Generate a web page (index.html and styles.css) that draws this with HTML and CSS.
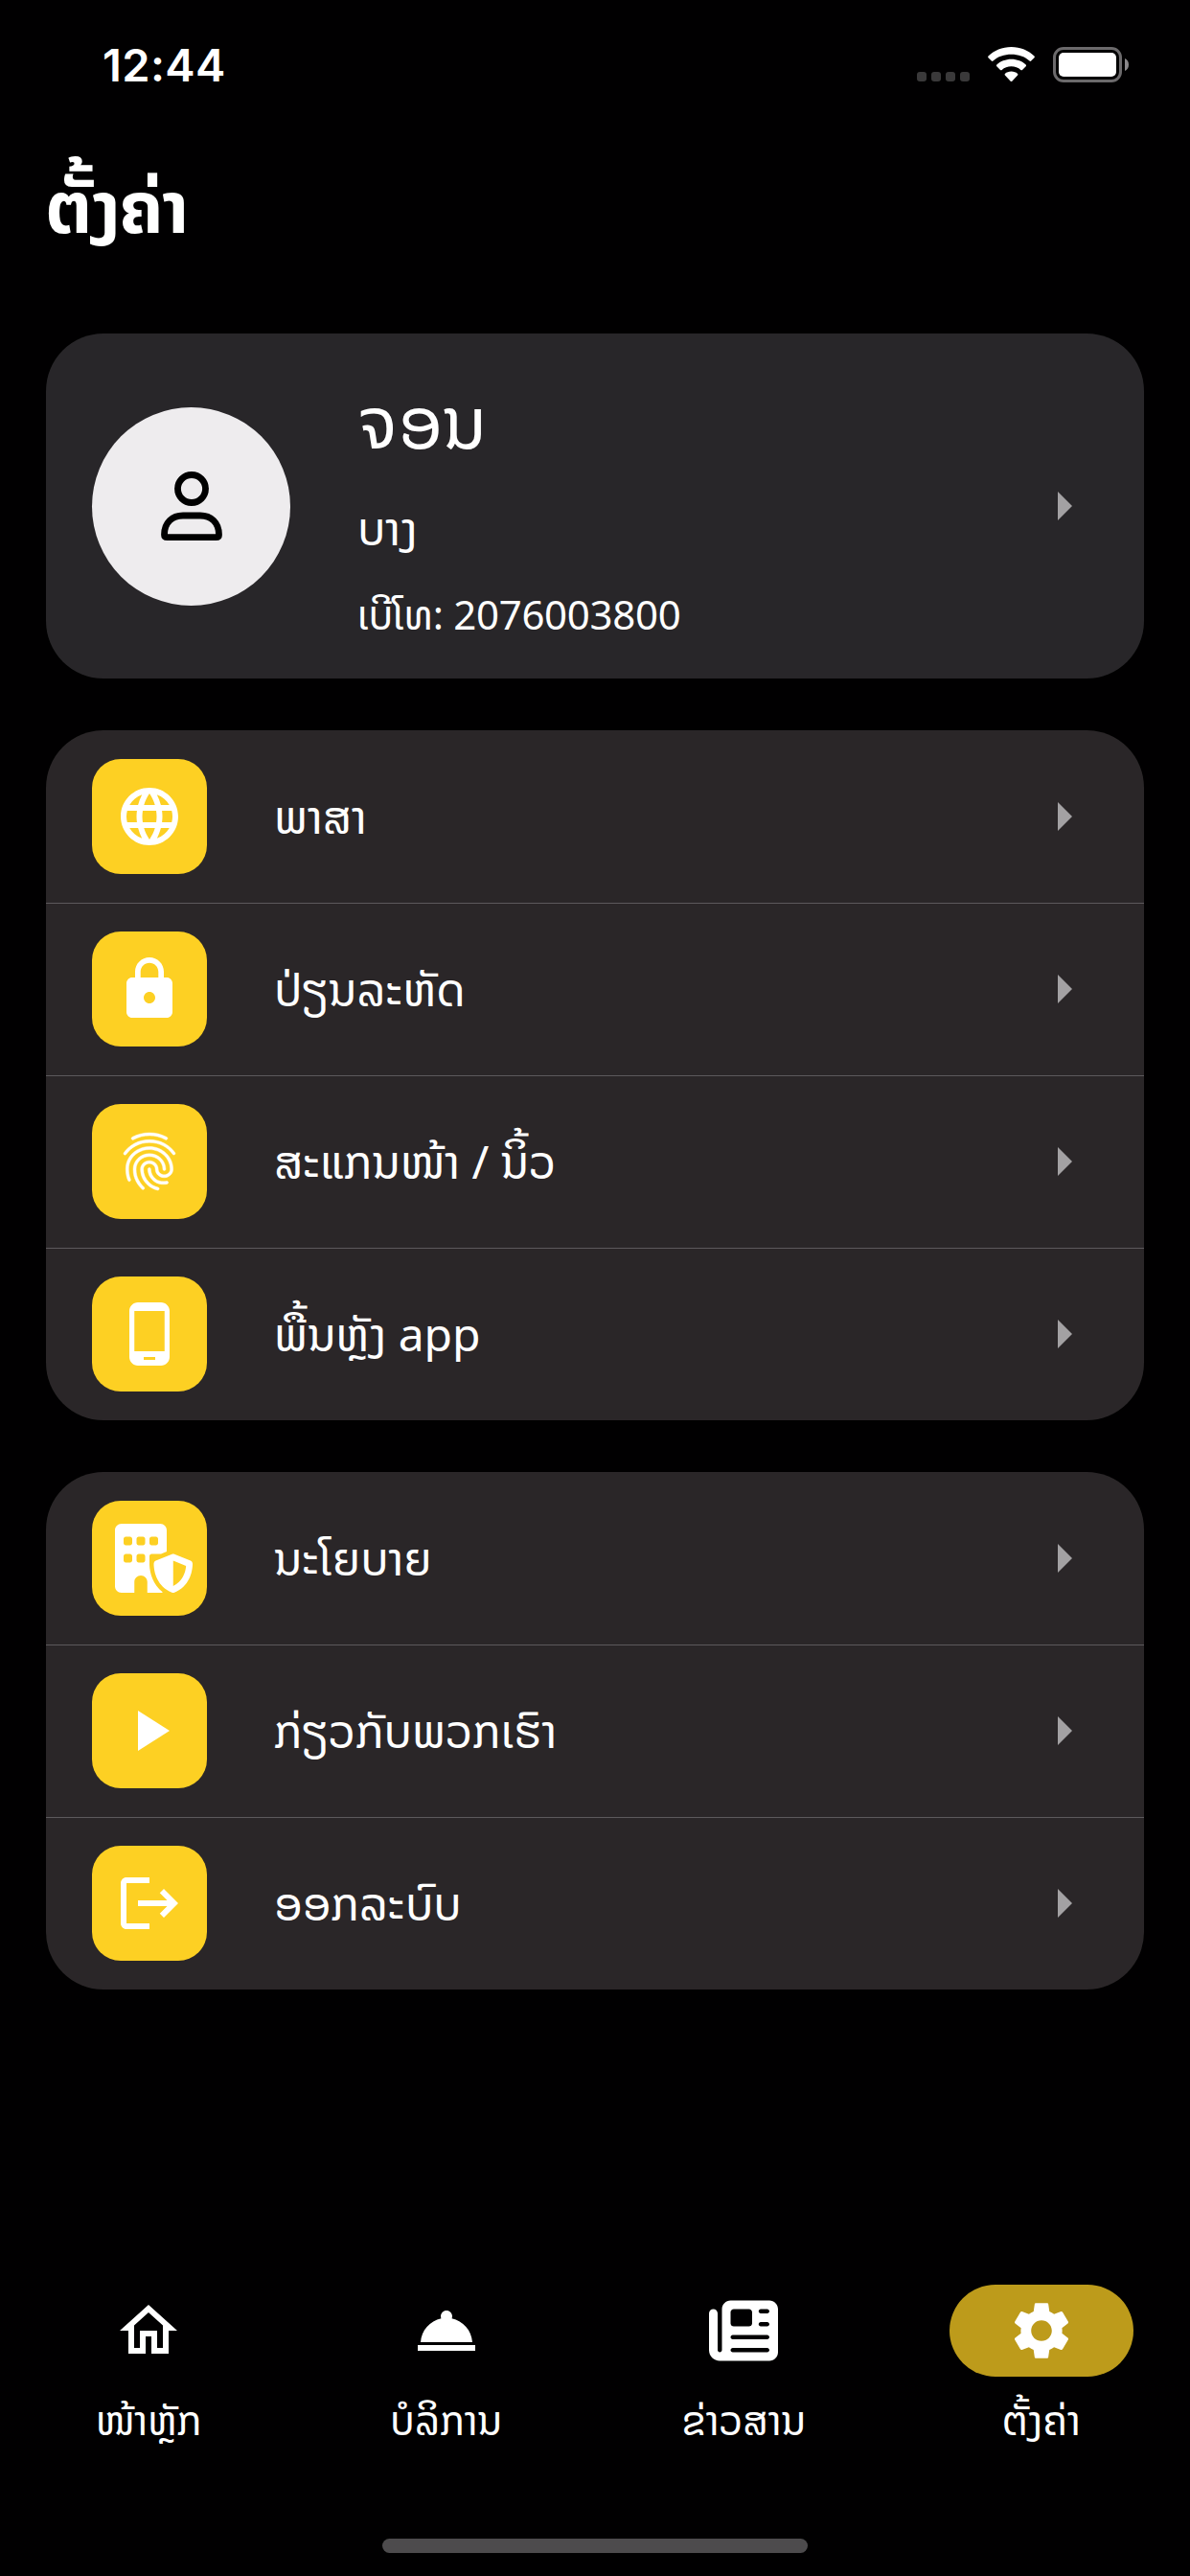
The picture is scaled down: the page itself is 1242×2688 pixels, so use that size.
FILE: index.html
```html
<!DOCTYPE html>
<html lang="lo">
<head>
	<title>ຕັ້ງຄ່າ</title>
	<meta charset="utf-8">
	<link rel="stylesheet" href="styles.css">
</head>
<body>
	<div id="wrapper">
		<div class="status">
			<span class="time">12:44</span>
			<div class="dots"><i></i><i></i><i></i><i></i></div>
			<svg class="wifi" viewBox="0 0 49 37">
				<path d="M24.5 0C34 0 42.5 3.7 48.5 9.6c.5.5.5 1.2 0 1.7l-3.3 3.3c-.5.5-1.2.5-1.7 0C38.5 9.9 31.8 7.8 24.5 7.8S10.5 9.9 5.5 14.6c-.5.5-1.2.5-1.7 0L.5 11.3c-.5-.5-.5-1.2 0-1.7C6.5 3.7 15 0 24.5 0z"/>
				<path d="M24.5 12.8c6 0 11.4 2.2 15.2 5.7.5.5.5 1.2 0 1.7l-3.7 3.7c-.5.5-1.2.5-1.7 0-2.6-2.3-6-3.6-9.8-3.6s-7.2 1.3-9.8 3.6c-.5.5-1.2.5-1.7 0l-3.7-3.7c-.5-.5-.5-1.2 0-1.7 3.8-3.5 9.2-5.7 15.2-5.7z"/>
				<path d="M24.5 25.6c2.6 0 4.9.9 6.6 2.3.5.5.5 1.1 0 1.6l-5.8 6.2c-.5.5-1.1.5-1.6 0l-5.8-6.2c-.5-.5-.5-1.1 0-1.6 1.7-1.4 4-2.3 6.6-2.3z"/>
			</svg>
			<div class="battery"><div class="level"></div></div>
			<svg class="nub" viewBox="0 0 4 13"><path d="M0 0c2.5 1 4 3.5 4 6.5S2.5 12 0 13z"/></svg>
		</div>

		<h1>ຕັ້ງຄ່າ</h1>

		<div class="card profile">
			<div class="avatar">
				<svg viewBox="0 0 64 72">
					<circle cx="32" cy="18" r="14.5"/>
					<path d="M3.5 66C3.5 53 12 46 23 46h18c11 0 19.5 7 19.5 20 0 2-1 2.6-3 2.6h-51c-2 0-3-.6-3-2.6z"/>
				</svg>
			</div>
			<div class="info">
				<p class="name">ຈອນ</p>
				<p class="surname">ບາງ</p>
				<p class="phone">ເບີໂທ: 2076003800</p>
			</div>
			<i class="arrow"></i>
		</div>

		<div class="card">
			<div class="row">
				<div class="icon"><svg viewBox="0 0 24 24"><path d="M11.99 2C6.47 2 2 6.48 2 12s4.47 10 9.99 10C17.52 22 22 17.52 22 12S17.52 2 11.99 2zm6.93 6h-2.95c-.32-1.25-.78-2.45-1.38-3.56 1.84.63 3.37 1.91 4.33 3.56zM12 4.04c.83 1.2 1.48 2.53 1.91 3.96h-3.82c.43-1.43 1.08-2.76 1.91-3.96zM4.26 14C4.1 13.36 4 12.69 4 12s.1-1.36.26-2h3.38c-.08.66-.14 1.32-.14 2 0 .68.06 1.34.14 2H4.26zm.82 2h2.95c.32 1.25.78 2.45 1.38 3.56-1.84-.63-3.37-1.9-4.33-3.56zm2.95-8H5.08c.96-1.66 2.49-2.93 4.33-3.56C8.81 5.55 8.35 6.75 8.03 8zM12 19.96c-.83-1.2-1.48-2.53-1.91-3.96h3.82c-.43 1.43-1.08 2.76-1.91 3.96zM14.34 14H9.66c-.09-.66-.16-1.32-.16-2 0-.68.07-1.35.16-2h4.68c.09.65.16 1.32.16 2 0 .68-.07 1.34-.16 2zm.25 5.56c.6-1.11 1.06-2.31 1.38-3.56h2.95c-.96 1.65-2.49 2.93-4.33 3.56zM16.36 14c.08-.66.14-1.32.14-2 0-.68-.06-1.34-.14-2h3.38c.16.64.26 1.31.26 2s-.1 1.36-.26 2h-3.38z"/></svg></div>
				<span class="label">ພາສາ</span>
				<i class="arrow"></i>
			</div>
			<div class="row">
				<div class="icon"><svg viewBox="0 0 24 24"><path d="M18 8h-1V6c0-2.76-2.24-5-5-5S7 3.24 7 6v2H6c-1.1 0-2 .9-2 2v10c0 1.1.9 2 2 2h12c1.1 0 2-.9 2-2V10c0-1.1-.9-2-2-2zm-6 9c-1.1 0-2-.9-2-2s.9-2 2-2 2 .9 2 2-.9 2-2 2zm3.1-9H8.9V6c0-1.71 1.39-3.1 3.1-3.1 1.71 0 3.1 1.39 3.1 3.1v2z"/></svg></div>
				<span class="label">ປ່ຽນລະຫັດ</span>
				<i class="arrow"></i>
			</div>
			<div class="row">
				<div class="icon"><svg class="finger" viewBox="0 0 24 24"><path d="M17.81 4.47c-.08 0-.16-.02-.23-.06C15.66 3.42 14 3 12.01 3c-1.98 0-3.86.47-5.57 1.41-.24.13-.54.04-.68-.2-.13-.24-.04-.55.2-.68C7.82 2.52 9.86 2 12.01 2c2.13 0 3.99.47 6.03 1.52.25.13.34.43.21.67-.09.18-.26.28-.44.28zM3.5 9.72c-.1 0-.2-.03-.29-.09-.23-.16-.28-.47-.12-.7.99-1.4 2.25-2.5 3.75-3.27C9.98 4.04 14 4.03 17.15 5.65c1.5.77 2.76 1.86 3.75 3.25.16.22.11.54-.12.7-.23.16-.54.11-.7-.12-.9-1.26-2.04-2.25-3.39-2.94-2.87-1.47-6.54-1.47-9.4.01-1.36.7-2.5 1.7-3.4 2.96-.08.14-.23.21-.39.21zm6.25 12.07c-.13 0-.26-.05-.35-.15-.87-.87-1.34-1.43-2.01-2.64-.69-1.23-1.05-2.73-1.05-4.34 0-2.97 2.54-5.39 5.66-5.39s5.66 2.42 5.66 5.39c0 .28-.22.5-.5.5s-.5-.22-.5-.5c0-2.42-2.09-4.39-4.66-4.39-2.57 0-4.66 1.97-4.66 4.39 0 1.44.32 2.77.93 3.85.64 1.15 1.08 1.64 1.85 2.42.19.2.19.51 0 .71-.11.1-.24.15-.37.15zm7.17-1.85c-1.19 0-2.24-.3-3.1-.89-1.49-1.01-2.38-2.65-2.38-4.39 0-.28.22-.5.5-.5s.5.22.5.5c0 1.41.72 2.74 1.94 3.56.71.48 1.54.71 2.54.71.24 0 .64-.03 1.04-.1.27-.05.53.13.58.41.05.27-.13.53-.41.58-.57.11-1.07.12-1.21.12zM14.91 22c-.04 0-.09-.01-.13-.02-1.59-.44-2.63-1.03-3.72-2.1-1.4-1.39-2.17-3.24-2.17-5.22 0-1.62 1.38-2.94 3.08-2.94 1.7 0 3.08 1.32 3.08 2.94 0 1.07.93 1.94 2.08 1.94s2.08-.87 2.08-1.94c0-3.77-3.25-6.83-7.25-6.83-2.84 0-5.44 1.58-6.61 4.03-.39.81-.59 1.76-.59 2.8 0 .78.07 2.01.67 3.61.1.26-.03.55-.29.64-.26.1-.55-.04-.64-.29-.49-1.31-.73-2.61-.73-3.96 0-1.2.23-2.29.68-3.24 1.33-2.79 4.28-4.6 7.51-4.6 4.55 0 8.25 3.51 8.25 7.83 0 1.62-1.38 2.94-3.08 2.94s-3.08-1.32-3.08-2.94c0-1.07-.93-1.94-2.08-1.94s-2.08.87-2.08 1.94c0 1.71.66 3.31 1.87 4.51.95.94 1.86 1.46 3.27 1.85.27.07.42.35.35.61-.05.23-.26.38-.47.38z"/></svg></div>
				<span class="label">ສະແກນໜ້າ / ນິ້ວ</span>
				<i class="arrow"></i>
			</div>
			<div class="row">
				<div class="icon"><svg viewBox="0 0 24 24"><path d="M16 1H8C6.34 1 5 2.34 5 4v16c0 1.66 1.34 3 3 3h8c1.66 0 3-1.34 3-3V4c0-1.66-1.34-3-3-3zm-2 20h-4v-1h4v1zm3.25-3H6.75V4h10.5v14z"/></svg></div>
				<span class="label">ພື້ນຫຼັງ app</span>
				<i class="arrow"></i>
			</div>
		</div>

		<div class="card">
			<div class="row">
				<div class="icon"><svg class="building" viewBox="0 0 576 512"><path d="M0 48C0 21.5 21.5 0 48 0H336c26.5 0 48 21.5 48 48V207l-42.4 17H304 272c-8.8 0-16 7.2-16 16v32 24.2V304c0 .9.1 1.7.2 2.6c2.3 58.1 24.1 144.8 98.7 201.5c-5.8 2.5-12.2 3.9-18.9 3.9H240V432c0-26.5-21.5-48-48-48s-48 21.5-48 48v80H48c-26.5 0-48-21.5-48-48V48zM80 224c-8.8 0-16 7.2-16 16v32c0 8.8 7.2 16 16 16h32c8.8 0 16-7.2 16-16V240c0-8.8-7.2-16-16-16H80zm80 16v32c0 8.8 7.2 16 16 16h32c8.8 0 16-7.2 16-16V240c0-8.8-7.2-16-16-16H176c-8.8 0-16 7.2-16 16zM64 112v32c0 8.8 7.2 16 16 16h32c8.8 0 16-7.2 16-16V112c0-8.8-7.2-16-16-16H80c-8.8 0-16 7.2-16 16zM176 96c-8.8 0-16 7.2-16 16v32c0 8.8 7.2 16 16 16h32c8.8 0 16-7.2 16-16V112c0-8.8-7.2-16-16-16H176zm80 16v32c0 8.8 7.2 16 16 16h32c8.8 0 16-7.2 16-16V112c0-8.8-7.2-16-16-16H272c-8.8 0-16 7.2-16 16zM423.1 225.7c5.7-2.3 12.1-2.3 17.8 0l120 48C570 277.4 576 286.2 576 296c0 63.3-25.9 168.8-134.8 214.2c-5.9 2.5-12.6 2.5-18.5 0C313.9 464.8 288 359.3 288 296c0-9.8 6-18.6 15.1-22.3l120-48zM527.4 312L432 273.8V461.7c68.2-33 91.5-99 95.4-149.7z"/></svg></div>
				<span class="label">ນະໂຍບາຍ</span>
				<i class="arrow"></i>
			</div>
			<div class="row">
				<div class="icon"><svg viewBox="0 0 24 24"><path d="M8 5v14l11-7z"/></svg></div>
				<span class="label">ກ່ຽວກັບພວກເຮົາ</span>
				<i class="arrow"></i>
			</div>
			<div class="row">
				<div class="icon"><svg viewBox="0 0 24 24"><path d="M17 7l-1.41 1.41L18.17 11H8v2h10.17l-2.58 2.58L17 17l5-5zM4 5h8V3H4c-1.1 0-2 .9-2 2v14c0 1.1.9 2 2 2h8v-2H4V5z"/></svg></div>
				<span class="label">ອອກລະບົບ</span>
				<i class="arrow"></i>
			</div>
		</div>

		<div class="nav">
			<div class="tab">
				<div class="pill"><svg viewBox="0 0 24 24"><path d="M12 5.69l5 4.5V18h-2v-6H9v6H7v-7.81l5-4.5M12 3L2 12h3v8h6v-6h2v6h6v-8h3L12 3z"/></svg></div>
				<p>ໜ້າຫຼັກ</p>
			</div>
			<div class="tab">
				<div class="pill"><svg viewBox="0 0 24 24"><path d="M2 17h20v2H2zm11.84-9.21c.1-.24.16-.51.16-.79 0-1.1-.9-2-2-2s-2 .9-2 2c0 .28.06.55.16.79C6.25 8.6 3.27 11.93 3 16h18c-.27-4.07-3.25-7.4-7.16-8.21z"/></svg></div>
				<p>ບໍລິການ</p>
			</div>
			<div class="tab">
				<div class="pill"><svg viewBox="0 0 512 512"><path d="M96 96c0-35.3 28.7-64 64-64H448c35.3 0 64 28.7 64 64V416c0 35.3-28.7 64-64 64H80c-44.2 0-80-35.8-80-80V128c0-17.7 14.3-32 32-32s32 14.3 32 32V400c0 8.8 7.2 16 16 16s16-7.2 16-16V96zm64 24v80c0 13.3 10.7 24 24 24H296c13.3 0 24-10.7 24-24V120c0-13.3-10.7-24-24-24H184c-13.3 0-24 10.7-24 24zm208-8c0 8.8 7.2 16 16 16h48c8.8 0 16-7.2 16-16s-7.2-16-16-16H384c-8.8 0-16 7.2-16 16zm0 96c0 8.8 7.2 16 16 16h48c8.8 0 16-7.2 16-16s-7.2-16-16-16H384c-8.8 0-16 7.2-16 16zM160 304c0 8.8 7.2 16 16 16H432c8.8 0 16-7.2 16-16s-7.2-16-16-16H176c-8.8 0-16 7.2-16 16zm0 96c0 8.8 7.2 16 16 16H432c8.8 0 16-7.2 16-16s-7.2-16-16-16H176c-8.8 0-16 7.2-16 16z"/></svg></div>
				<p>ຂ່າວສານ</p>
			</div>
			<div class="tab active">
				<div class="pill"><svg viewBox="0 0 24 24"><path d="M19.14 12.94c.04-.3.06-.61.06-.94 0-.32-.02-.64-.07-.94l2.03-1.58c.18-.14.23-.41.12-.61l-1.92-3.32c-.12-.22-.37-.29-.59-.22l-2.39.96c-.5-.38-1.03-.7-1.62-.94l-.36-2.54c-.04-.24-.24-.41-.48-.41h-3.84c-.24 0-.43.17-.47.41l-.36 2.54c-.59.24-1.13.57-1.62.94l-2.39-.96c-.22-.08-.47 0-.59.22L2.74 8.87c-.12.21-.08.47.12.61l2.03 1.58c-.05.3-.09.63-.09.94s.02.64.07.94l-2.03 1.58c-.18.14-.23.41-.12.61l1.92 3.32c.12.22.37.29.59.22l2.39-.96c.5.38 1.03.7 1.62.94l.36 2.54c.05.24.24.41.48.41h3.84c.24 0 .44-.17.47-.41l.36-2.54c.59-.24 1.13-.56 1.62-.94l2.39.96c.22.08.47 0 .59-.22l1.92-3.32c.12-.22.07-.47-.12-.61l-2.01-1.58zM12 15.6c-1.98 0-3.6-1.62-3.6-3.6s1.62-3.6 3.6-3.6 3.6 1.62 3.6 3.6-1.62 3.6-3.6 3.6z"/></svg></div>
				<p>ຕັ້ງຄ່າ</p>
			</div>
		</div>
		<div class="home-bar"></div>
	</div>
</body>
</html>
```
FILE: styles.css
```css
body {
	margin: 0;
	padding: 0;
	background: #010001;
	color: white;
	font-family: "Noto Sans Lao", "Noto Sans", "DejaVu Sans", sans-serif;
}
#wrapper {
	width: 1242px;
	height: 2688px;
	display: flex;
	flex-direction: column;
	overflow: hidden;
}
h1, p {
	margin: 0;
	padding: 0;
	white-space: nowrap;
}
svg {
	display: block;
	fill: white;
}

/* status bar */
.status {
	height: 132px;
	box-sizing: border-box;
	padding: 0 64px 0 107px;
	display: flex;
	align-items: center;
	flex: none;
}
.time {
	font-family: Inter, sans-serif;
	font-weight: 600;
	font-size: 47px;
	line-height: 60px;
	letter-spacing: 0.4px;
	margin: 4px auto 0 0;
}
.dots {
	display: flex;
	gap: 5px;
	margin: 28px 19px 0 0;
}
.dots i {
	width: 10px;
	height: 10px;
	border-radius: 3px;
	background: #3a393a;
}
.wifi {
	width: 49px;
	height: 37px;
	margin: 2px 19px 0 0;
}
.battery {
	width: 72px;
	height: 37px;
	box-sizing: border-box;
	border: 3px solid #6c6a6c;
	border-radius: 11px;
	padding: 3px;
	margin: 2px 3px 0 0;
}
.level {
	height: 25px;
	border-radius: 5px;
	background: white;
}
.nub {
	width: 4px;
	height: 13px;
	fill: #8a888a;
	margin-top: 2px;
}

h1 {
	height: 216px;
	padding-left: 48px;
	font-size: 74px;
	line-height: 169px;
	font-weight: bold;
	flex: none;
}

/* cards */
.card {
	margin: 0 48px 54px;
	border-radius: 60px;
	background: #2a2628;
	overflow: hidden;
	flex: none;
}
.profile {
	height: 360px;
	display: flex;
	align-items: center;
	background: #282629;
}
.avatar {
	width: 207px;
	height: 207px;
	margin-left: 48px;
	border-radius: 50%;
	background: #eeecee;
	display: flex;
	align-items: center;
	justify-content: center;
}
.avatar svg {
	width: 64px;
	height: 72px;
	fill: none;
	stroke: black;
	stroke-width: 6.8;
}
.info {
	margin-left: 70px;
	padding-top: 6px;
	flex: 1;
}
.name {
	font-size: 75px;
	line-height: 130px;
}
.surname {
	font-size: 48px;
	line-height: 92px;
}
.phone {
	font-size: 42px;
	line-height: 88px;
	letter-spacing: -0.3px;
}
.row {
	height: 180px;
	box-sizing: border-box;
	padding-left: 48px;
	display: flex;
	align-items: center;
}
.row + .row {
	background: linear-gradient(#5c595c, #5c595c) top / 100% 1px no-repeat;
}
.icon {
	width: 120px;
	height: 120px;
	box-sizing: border-box;
	padding: 24px;
	border-radius: 30px;
	background: #fdd023;
}
.icon svg {
	width: 72px;
	height: 72px;
}
.icon .building {
	width: 81px;
}
.finger {
	stroke: white;
	stroke-width: 0.15;
}
.label {
	margin-left: 70px;
	flex: 1;
	font-size: 48px;
	white-space: nowrap;
}
.arrow {
	margin-right: 75px;
	border-left: 15px solid #a3a1a3;
	border-top: 15px solid transparent;
	border-bottom: 15px solid transparent;
}

/* bottom navigation */
.nav {
	margin-top: auto;
	height: 265px;
	display: flex;
	flex: none;
}
.tab {
	flex: 1;
	display: flex;
	flex-direction: column;
	align-items: center;
	font-size: 42px;
}
.pill {
	width: 192px;
	height: 96px;
	border-radius: 48px;
	display: flex;
	align-items: center;
	justify-content: center;
}
.active .pill {
	background: #bd9b1b;
}
.pill svg {
	width: 72px;
	height: 72px;
}
.tab p {
	line-height: 91px;
}
.home-bar {
	width: 444px;
	height: 15px;
	margin: 0 auto 24px;
	border-radius: 8px;
	background: #4d4b4d;
	flex: none;
}
```
